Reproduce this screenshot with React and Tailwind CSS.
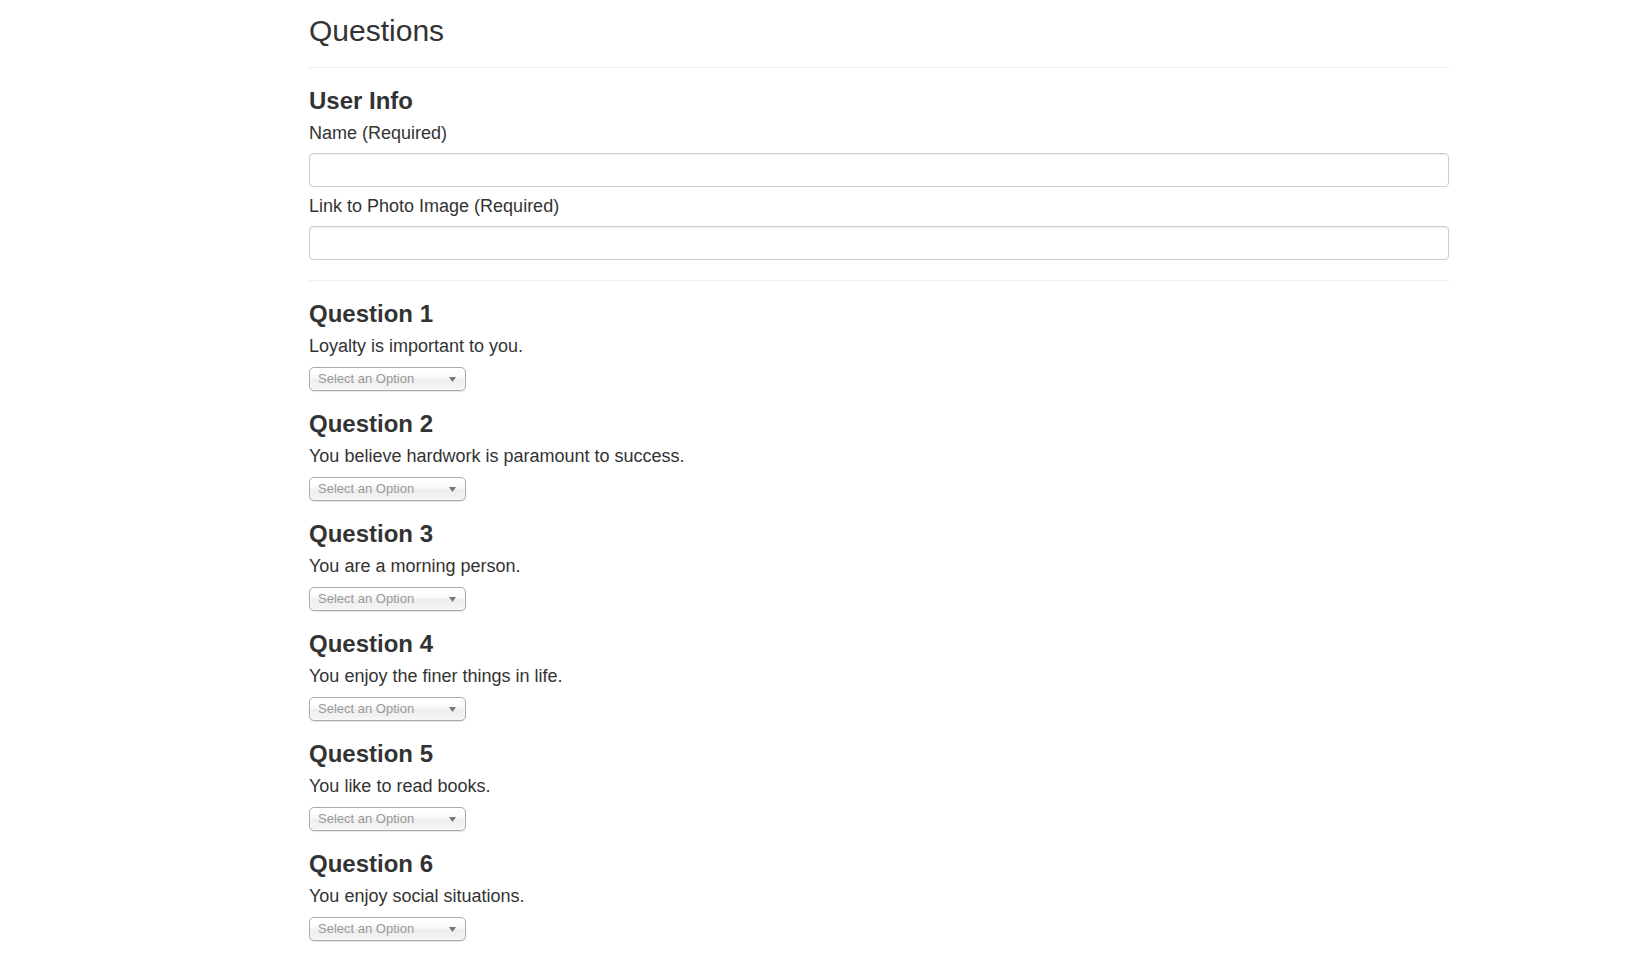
import React from 'react';

const questions = [
  'Loyalty is important to you.',
  'You believe hardwork is paramount to success.',
  'You are a morning person.',
  'You enjoy the finer things in life.',
  'You like to read books.',
  'You enjoy social situations.',
];

const ChosenSelect = () => (
  <div className="mt-[8px] relative w-[157px] h-[24px] border border-[#aaa] rounded-[5px] bg-[linear-gradient(#fff_20%,#f6f6f6_50%,#eee_52%,#f4f4f4_100%)] shadow-[inset_0_0_3px_#fff,0_1px_1px_rgba(0,0,0,0.1)] pl-[8px] text-[13px] leading-[22px] text-[#999] cursor-pointer">
    Select an Option
    <svg className="absolute right-[9px] top-[9px]" width="7" height="5" viewBox="0 0 7 5">
      <path d="M0 0 L7 0 L3.5 5 Z" fill="#777" />
    </svg>
  </div>
);

const TextField = ({ label }) => (
  <div>
    <label className="block mt-[6px] text-[18px] leading-[26px] text-[#333]">{label}</label>
    <input
      type="text"
      className="block mt-[7px] w-full h-[34px] px-3 border border-[#ccc] rounded-[4px] bg-white shadow-[inset_0_1px_1px_rgba(0,0,0,0.075)] outline-none"
    />
  </div>
);

export default function App() {
  return (
    <div className="min-h-screen bg-white font-['Liberation_Sans',Arial,sans-serif] text-[#333]">
      <div className="ml-[309px] w-[1140px] pb-10">
        {/* header */}
        <div className="pt-[14px] pb-[20px] border-b border-[#eee]">
          <h1 className="text-[30px] leading-[33px] font-normal">Questions</h1>
        </div>

        {/* user info */}
        <div className="pb-[20px] border-b border-[#eee]">
          <h3 className="mt-[20px] text-[24px] leading-[26px] font-bold">User Info</h3>
          <TextField label="Name (Required)" />
          <TextField label="Link to Photo Image (Required)" />
        </div>

        {/* questions */}
        {questions.map((q, i) => (
          <div key={i}>
            <h3 className="mt-[20px] text-[24px] leading-[26px] font-bold">Question {i + 1}</h3>
            <p className="mt-[6px] text-[18px] leading-[26px]">{q}</p>
            <ChosenSelect />
          </div>
        ))}
      </div>
    </div>
  );
}
